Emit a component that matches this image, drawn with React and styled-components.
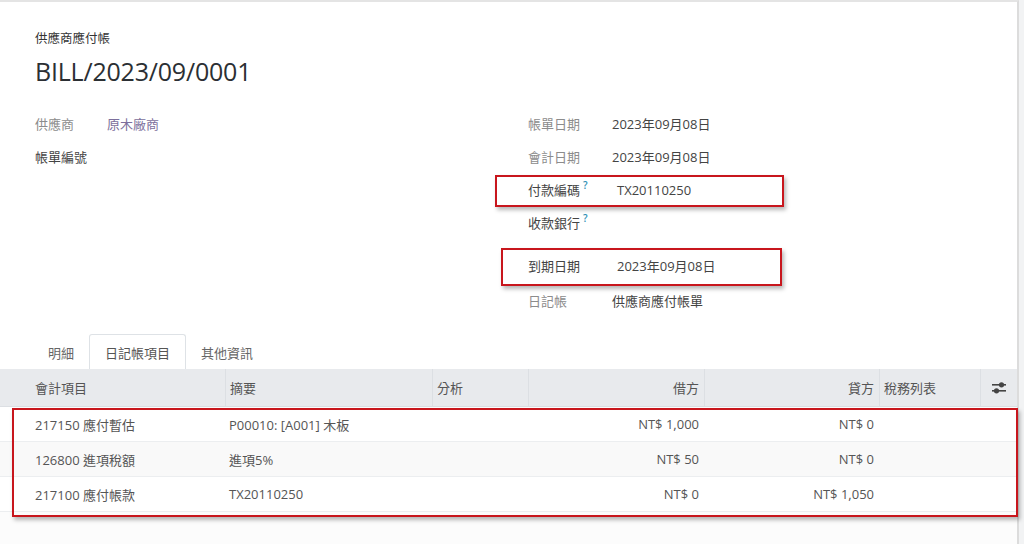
import React from 'react';
import styled, { createGlobalStyle } from 'styled-components';

const GlobalStyle = createGlobalStyle`
  html, body {
    margin: 0;
    padding: 0;
    background: #f2f3f4;
    font-family: "Open Sans", "Noto Sans CJK TC", sans-serif;
    font-size: 13px;
    color: #444;
  }
`;

const Page = styled.div`
  width: 1024px;
  height: 544px;
  overflow: hidden;
  position: relative;
  background: #f2f3f4;
`;

const Sheet = styled.div`
  width: 1019px;
  height: 544px;
  background: #fcfcfc;
  border-top: 2px solid #e4e4e4;
  border-right: 2px solid #dcdcdc;
  box-sizing: border-box;
  display: flex;
  flex-direction: column;
`;

const Body = styled.div`
  background: #fff;
`;

const TitleBlock = styled.div`
  padding: 28px 35px 0;
`;

const Kind = styled.div`
  font-size: 12.5px;
  color: #333;
  line-height: 18px;
`;

const Title = styled.h1`
  margin: 6px 0 0;
  font-size: 25px;
  font-weight: 400;
  color: #2b2f33;
  line-height: 34px;
  letter-spacing: -0.2px;
`;

const Fields = styled.div`
  display: grid;
  grid-template-columns: 493px 1fr;
  padding: 19px 35px 0;
  height: 227px;
`;

const Group = styled.div`
  display: flex;
  flex-direction: column;
`;

const Row = styled.div`
  display: flex;
  align-items: center;
  height: 33px;
  margin-top: ${p => p.$gap || 0}px;
`;

const Label = styled.div`
  width: ${p => p.$w || 84}px;
  flex-shrink: 0;
  color: ${p => (p.$strong ? '#444' : '#8c8c8c')};
`;

const Help = styled.span`
  display: inline-block;
  position: relative;
  top: -6px;
  color: #2f8fb4;
  font-size: 10px;
  font-weight: 600;
  line-height: 10px;
  margin-left: 3px;
`;

const Value = styled.div`
  color: ${p => (p.$link ? '#7c6f9c' : '#444')};
  padding-left: ${p => p.$shift || 0}px;
`;

const TabBar = styled.div`
  display: flex;
  padding-left: 33px;
  height: 35px;
  align-items: stretch;
`;

const Tab = styled.div`
  display: flex;
  align-items: center;
  padding: 0 ${p => (p.$active ? 15 : 14)}px;
  color: ${p => (p.$active ? '#555' : '#666')};
  background: ${p => (p.$active ? '#fff' : 'transparent')};
  border: 1px solid ${p => (p.$active ? '#dee2e6' : 'transparent')};
  border-bottom: none;
  border-radius: 3px 3px 0 0;
`;

const Table = styled.div`
  display: grid;
  grid-template-columns: 225px 207px 96px 176px 175px 101px 1fr;
`;

const Head = styled.div`
  display: flex;
  align-items: center;
  justify-content: ${p => (p.$right ? 'flex-end' : p.$center ? 'center' : 'flex-start')};
  height: 38px;
  padding: 0 ${p => (p.$right ? 5 : 4)}px 0 ${p => p.$pl ?? 4}px;
  background: #e8eaed;
  color: #555;
  border-left: ${p => (p.$first ? 'none' : '1px solid #dcdfe3')};
  border-bottom: 1px solid #dcdfe3;
  box-sizing: border-box;
`;

const Cell = styled.div`
  display: flex;
  align-items: center;
  justify-content: ${p => (p.$right ? 'flex-end' : 'flex-start')};
  height: 35px;
  padding: 0 ${p => (p.$right ? 5 : 4)}px 0 ${p => p.$pl ?? 4}px;
  background: ${p => (p.$odd ? '#f9f9f9' : '#fff')};
  border-bottom: 1px solid #eceef0;
  color: #555;
  box-sizing: border-box;
`;

const Marker = styled.div`
  position: absolute;
  left: ${p => p.$x}px;
  top: ${p => p.$y}px;
  width: ${p => p.$w}px;
  height: ${p => p.$h}px;
  border: 2px solid #c8161d;
  box-sizing: border-box;
  box-shadow: 2px 3px 4px rgba(0, 0, 0, 0.28);
  pointer-events: none;
`;

function SlidersIcon() {
  return (
    <svg width="14" height="13" viewBox="0 0 14 13">
      <rect x="0" y="3" width="14" height="1.6" fill="#444" />
      <rect x="0" y="9" width="14" height="1.6" fill="#444" />
      <circle cx="9.5" cy="3.8" r="2.6" fill="#444" />
      <circle cx="4.5" cy="9.8" r="2.6" fill="#444" />
    </svg>
  );
}

const lines = [
  ['217150 應付暫估', 'P00010: [A001] 木板', 'NT$ 1,000', 'NT$ 0'],
  ['126800 進項稅額', '進項5%', 'NT$ 50', 'NT$ 0'],
  ['217100 應付帳款', 'TX20110250', 'NT$ 0', 'NT$ 1,050'],
];

export default function App() {
  return (
    <Page>
      <GlobalStyle />
      <Sheet>
        <Body>
          <TitleBlock>
            <Kind>供應商應付帳</Kind>
            <Title>BILL/2023/09/0001</Title>
          </TitleBlock>
          <Fields>
            <Group>
              <Row>
                <Label $w={72}>供應商</Label>
                <Value $link>原木廠商</Value>
              </Row>
              <Row>
                <Label $strong $w={72}>帳單編號</Label>
              </Row>
            </Group>
            <Group>
              <Row>
                <Label>帳單日期</Label>
                <Value>2023年09月08日</Value>
              </Row>
              <Row>
                <Label>會計日期</Label>
                <Value>2023年09月08日</Value>
              </Row>
              <Row>
                <Label $strong>付款編碼<Help>?</Help></Label>
                <Value $shift={5}>TX20110250</Value>
              </Row>
              <Row>
                <Label $strong>收款銀行<Help>?</Help></Label>
              </Row>
              <Row $gap={10}>
                <Label $strong>到期日期</Label>
                <Value $shift={5}>2023年09月08日</Value>
              </Row>
              <Row $gap={2}>
                <Label>日記帳</Label>
                <Value>供應商應付帳單</Value>
              </Row>
            </Group>
          </Fields>
          <TabBar>
            <Tab>明細</Tab>
            <Tab $active>日記帳項目</Tab>
            <Tab>其他資訊</Tab>
          </TabBar>
        </Body>
        <Table>
          <Head $first $pl={35}>會計項目</Head>
          <Head>摘要</Head>
          <Head>分析</Head>
          <Head $right>借方</Head>
          <Head $right>貸方</Head>
          <Head>稅務列表</Head>
          <Head $center><SlidersIcon /></Head>
          {lines.map((l, i) => (
            <React.Fragment key={l[0]}>
              <Cell $odd={i === 1} $pl={35}>{l[0]}</Cell>
              <Cell $odd={i === 1}>{l[1]}</Cell>
              <Cell $odd={i === 1} />
              <Cell $odd={i === 1} $right>{l[2]}</Cell>
              <Cell $odd={i === 1} $right>{l[3]}</Cell>
              <Cell $odd={i === 1} />
              <Cell $odd={i === 1} />
            </React.Fragment>
          ))}
        </Table>
      </Sheet>
      <Marker $x={495} $y={175} $w={289} $h={32} />
      <Marker $x={501} $y={248} $w={281} $h={38} />
      <Marker $x={12} $y={408} $w={1006} $h={109} />
    </Page>
  );
}
